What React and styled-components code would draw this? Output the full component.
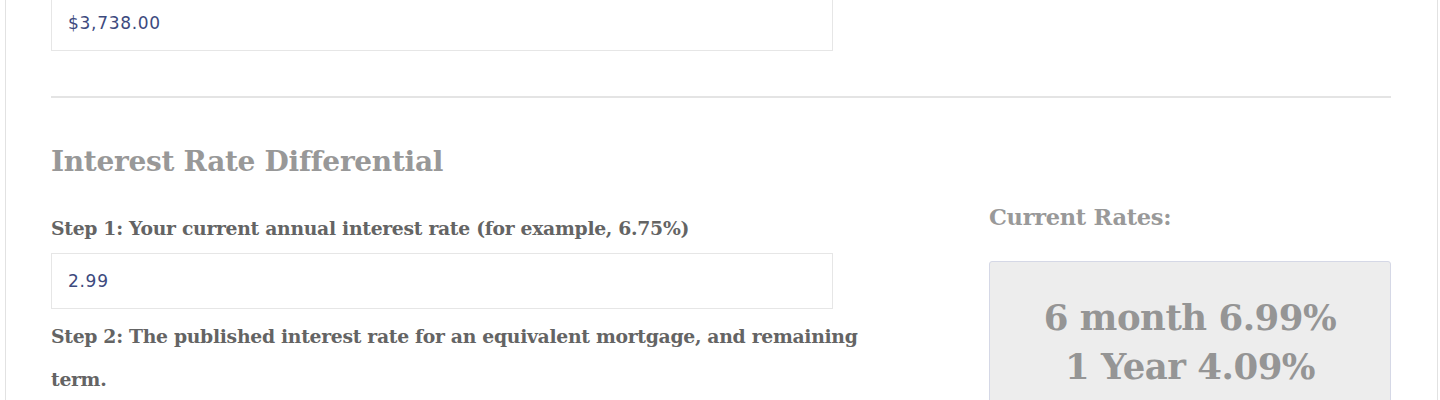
import React from 'react';
import styled, { createGlobalStyle } from 'styled-components';

const GlobalStyle = createGlobalStyle`
  html, body {
    margin: 0;
    padding: 0;
    background: #fff;
    overflow: hidden;
  }
  body {
    font-family: "DejaVu Serif", serif;
  }
`;

const Page = styled.div`
  padding: 0 2px 0 5px;
  margin-top: -60px;
`;

const Panel = styled.div`
  border: 1px solid #e2e2e2;
  padding: 54px 46px 60px 45px;
  background: #fff;
`;

const TextInput = styled.input`
  display: block;
  box-sizing: border-box;
  width: 782px;
  height: 56px;
  padding: 0 16px;
  border: 1px solid #e6e6e6;
  background: #fff;
  font-family: "DejaVu Sans", "Noto Sans", sans-serif;
  font-size: 17px;
  letter-spacing: 0.7px;
  color: #3d4a7e;
  outline: none;
`;

const Divider = styled.hr`
  border: 0;
  border-top: 2px solid #e4e4e4;
  margin: 45px 0 44px;
`;

const Row = styled.div`
  display: grid;
  grid-template-columns: 862px 402px;
  justify-content: space-between;
`;

const Heading = styled.h2`
  margin: 0 0 25px;
  font-size: 28px;
  line-height: 40px;
  font-weight: 700;
  color: #989898;
  letter-spacing: -0.3px;
`;

const Label = styled.label`
  display: block;
  margin: ${p => p.$top || 0}px 0 ${p => p.$bottom || 0}px;
  font-size: 18.8px;
  line-height: 43px;
  font-weight: 700;
  color: #646464;
  letter-spacing: -0.3px;
`;

const Side = styled.aside`
  padding-top: 60px;
`;

const SideTitle = styled.h3`
  margin: 0 0 29px;
  font-size: 22.5px;
  line-height: 30px;
  font-weight: 700;
  color: #999;
  letter-spacing: -0.3px;
`;

const RatesBox = styled.div`
  background: #ededed;
  border: 1px solid #d5d8e6;
  border-radius: 3px;
  padding: 31px 10px;
  text-align: center;
`;

const RateLine = styled.div`
  font-size: 35.5px;
  line-height: 49px;
  font-weight: 700;
  color: #959595;
  letter-spacing: -0.5px;
`;

const rates = ['6 month 6.99%', '1 Year 4.09%', '2 Year 4.09%', '3 Year 4.89%'];

export default function App() {
  return (
    <>
      <GlobalStyle />
      <Page>
        <Panel>
          <TextInput defaultValue="$3,738.00" readOnly />
          <Divider />
          <Row>
            <div>
              <Heading>Interest Rate Differential</Heading>
              <Label $bottom={3}>Step 1: Your current annual interest rate (for example, 6.75%)</Label>
              <TextInput defaultValue="2.99" readOnly />
              <Label $top={6}>Step 2: The published interest rate for an equivalent mortgage, and remaining term.</Label>
            </div>
            <Side>
              <SideTitle>Current Rates:</SideTitle>
              <RatesBox>
                {rates.map(r => (
                  <RateLine key={r}>{r}</RateLine>
                ))}
              </RatesBox>
            </Side>
          </Row>
        </Panel>
      </Page>
    </>
  );
}
